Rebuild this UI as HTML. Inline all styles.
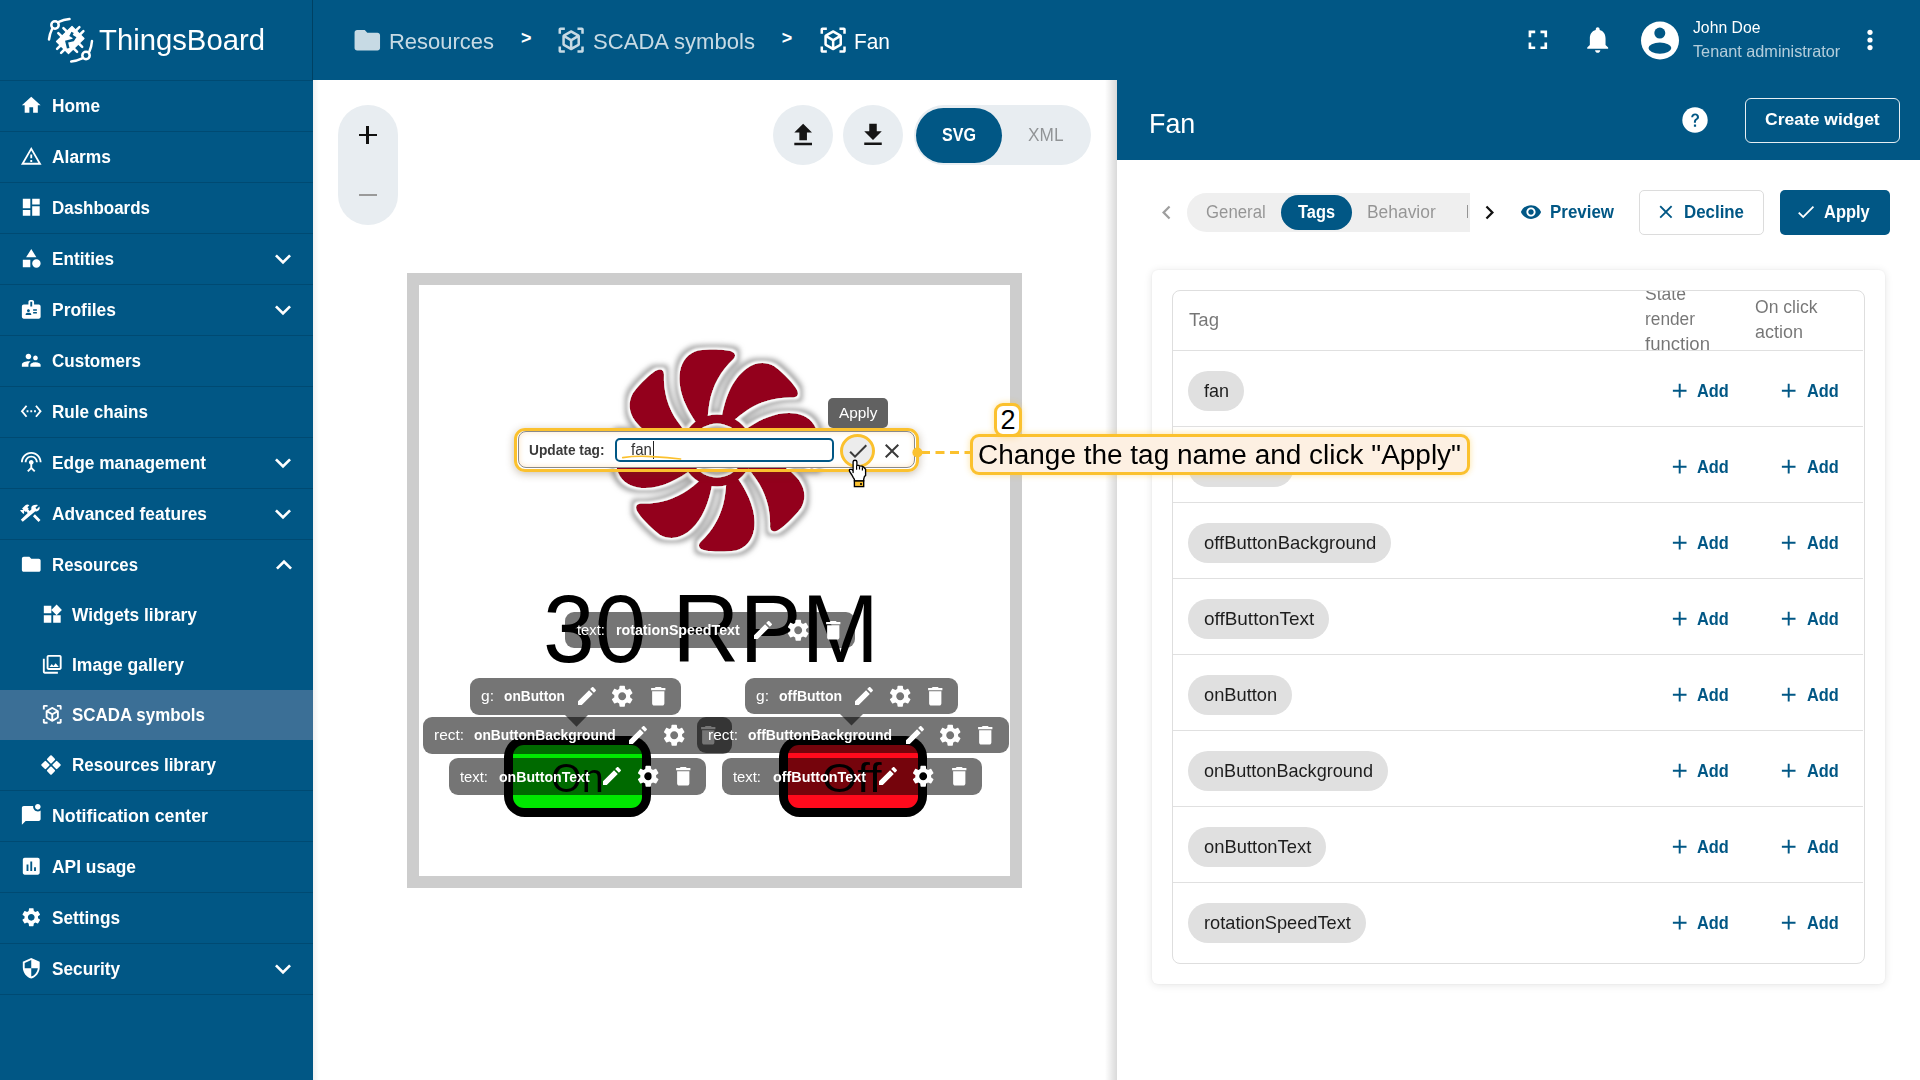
<!DOCTYPE html>
<html><head><meta charset="utf-8"><style>
*{box-sizing:border-box;margin:0;padding:0}
html,body{width:1920px;height:1080px;overflow:hidden;background:#fff;font-family:"Liberation Sans",sans-serif}
.a{position:absolute}
svg.i{position:absolute;overflow:visible}
.t{position:absolute;white-space:nowrap;line-height:1}
</style></head><body>
<div class="a" style="left:0;top:0;width:313px;height:1080px;background:#015785"></div>
<div class="a" style="left:0;top:80px;width:313px;height:1px;background:rgba(0,0,0,.14)"></div>
<div class="a" style="left:0;top:131px;width:313px;height:1px;background:rgba(0,0,0,.14)"></div>
<div class="a" style="left:0;top:182px;width:313px;height:1px;background:rgba(0,0,0,.14)"></div>
<div class="a" style="left:0;top:233px;width:313px;height:1px;background:rgba(0,0,0,.14)"></div>
<div class="a" style="left:0;top:284px;width:313px;height:1px;background:rgba(0,0,0,.14)"></div>
<div class="a" style="left:0;top:335px;width:313px;height:1px;background:rgba(0,0,0,.14)"></div>
<div class="a" style="left:0;top:386px;width:313px;height:1px;background:rgba(0,0,0,.14)"></div>
<div class="a" style="left:0;top:437px;width:313px;height:1px;background:rgba(0,0,0,.14)"></div>
<div class="a" style="left:0;top:488px;width:313px;height:1px;background:rgba(0,0,0,.14)"></div>
<div class="a" style="left:0;top:539px;width:313px;height:1px;background:rgba(0,0,0,.14)"></div>
<div class="a" style="left:0;top:790px;width:313px;height:1px;background:rgba(0,0,0,.14)"></div>
<div class="a" style="left:0;top:841px;width:313px;height:1px;background:rgba(0,0,0,.14)"></div>
<div class="a" style="left:0;top:892px;width:313px;height:1px;background:rgba(0,0,0,.14)"></div>
<div class="a" style="left:0;top:943px;width:313px;height:1px;background:rgba(0,0,0,.14)"></div>
<div class="a" style="left:0;top:994px;width:313px;height:1px;background:rgba(0,0,0,.14)"></div>
<div class="a" style="left:0;top:690px;width:313px;height:50px;background:#3b6f96"></div>
<svg class="i" style="left:20.10px;top:94.20px;width:22.50px;height:22.50px;fill:#fff;" viewBox="0 0 24 24"><path d="M10 20v-6h4v6h5v-8h3L12 3 2 12h3v8z"/></svg>
<div id="t1" class="t" style="left:52.00px;top:96.96px;font-size:18px;color:#fff;font-weight:bold;transform:scaleX(0.9597);transform-origin:0 0;">Home</div>
<svg class="i" style="left:20.10px;top:145.20px;width:22.50px;height:22.50px;fill:#fff;" viewBox="0 0 24 24"><path d="M12 5.99L19.53 19H4.47L12 5.99M12 2L1 21h22L12 2zm1 14h-2v2h2v-2zm0-6h-2v4h2v-4z"/></svg>
<div id="t2" class="t" style="left:52.00px;top:147.96px;font-size:18px;color:#fff;font-weight:bold;transform:scaleX(0.9667);transform-origin:0 0;">Alarms</div>
<svg class="i" style="left:20.10px;top:196.20px;width:22.50px;height:22.50px;fill:#fff;" viewBox="0 0 24 24"><path d="M3 13h8V3H3v10zm0 8h8v-6H3v6zm10 0h8V11h-8v10zm0-18v6h8V3h-8z"/></svg>
<div id="t3" class="t" style="left:52.00px;top:198.96px;font-size:18px;color:#fff;font-weight:bold;transform:scaleX(0.9420);transform-origin:0 0;">Dashboards</div>
<svg class="i" style="left:20.10px;top:247.20px;width:22.50px;height:22.50px;fill:#fff;" viewBox="0 0 24 24"><path d="M12 2l-5.5 9h11zM17.5 13a4.5 4.5 0 1 0 0 9a4.5 4.5 0 1 0 0-9zM3 13.5h8v8H3z"/></svg>
<div id="t4" class="t" style="left:52.00px;top:249.96px;font-size:18px;color:#fff;font-weight:bold;transform:scaleX(0.9536);transform-origin:0 0;">Entities</div>
<svg class="i" style="left:266.50px;top:242.70px;width:32.00px;height:32.00px;fill:#fff;" viewBox="0 0 24 24"><path d="M7.41 8.59L12 13.17l4.59-4.58L18 10l-6 6-6-6 1.41-1.41z"/></svg>
<svg class="i" style="left:20.10px;top:298.20px;width:22.50px;height:22.50px;fill:#fff;" viewBox="0 0 24 24"><path d="M20 7h-5V4c0-1.1-.9-2-2-2h-2c-1.1 0-2 .9-2 2v3H4c-1.1 0-2 .9-2 2v11c0 1.1.9 2 2 2h16c1.1 0 2-.9 2-2V9c0-1.1-.9-2-2-2zM9 12c.83 0 1.5.67 1.5 1.5S9.83 15 9 15s-1.5-.67-1.5-1.5S8.17 12 9 12zm3 6H6v-.75c0-1 2-1.5 3-1.5s3 .5 3 1.5V18zm1-9h-2V4h2v5zm5 7.5h-4V15h4v1.5zm0-3h-4V12h4v1.5z"/></svg>
<div id="t5" class="t" style="left:52.00px;top:300.96px;font-size:18px;color:#fff;font-weight:bold;transform:scaleX(0.9692);transform-origin:0 0;">Profiles</div>
<svg class="i" style="left:266.50px;top:293.70px;width:32.00px;height:32.00px;fill:#fff;" viewBox="0 0 24 24"><path d="M7.41 8.59L12 13.17l4.59-4.58L18 10l-6 6-6-6 1.41-1.41z"/></svg>
<svg class="i" style="left:20.10px;top:349.20px;width:22.50px;height:22.50px;fill:#fff;" viewBox="0 0 24 24"><path d="M16.5 12c1.38 0 2.49-1.12 2.49-2.5S17.88 7 16.5 7C15.12 7 14 8.12 14 9.5s1.12 2.5 2.5 2.5zM9 11c1.66 0 2.99-1.34 2.99-3S10.66 5 9 5C7.34 5 6 6.34 6 8s1.34 3 3 3zm7.5 3c-1.83 0-5.5.92-5.5 2.75V19h11v-2.25c0-1.83-3.67-2.75-5.5-2.75zM9 13c-2.33 0-7 1.17-7 3.5V19h7v-2.25c0-.85.33-2.34 2.37-3.47C10.5 13.1 9.66 13 9 13z"/></svg>
<div id="t6" class="t" style="left:52.00px;top:351.96px;font-size:18px;color:#fff;font-weight:bold;transform:scaleX(0.9465);transform-origin:0 0;">Customers</div>
<svg class="i" style="left:20.10px;top:400.20px;width:22.50px;height:22.50px;fill:#fff;" viewBox="0 0 24 24"><path d="M7.77 6.76L6.23 5.48.82 12l5.41 6.52 1.54-1.28L3.42 12l4.35-5.24zM7 13h2v-2H7v2zm10-2h-2v2h2v-2zm-6 2h2v-2h-2v2zm6.77-7.52l-1.54 1.28L20.58 12l-4.35 5.24 1.54 1.28L23.18 12l-5.41-6.52z"/></svg>
<div id="t7" class="t" style="left:52.00px;top:402.96px;font-size:18px;color:#fff;font-weight:bold;transform:scaleX(0.9502);transform-origin:0 0;">Rule chains</div>
<svg class="i" style="left:20.10px;top:451.20px;width:22.50px;height:22.50px;fill:#fff;" viewBox="0 0 24 24"><path d="M12 5c-3.87 0-7 3.13-7 7h2c0-2.76 2.24-5 5-5s5 2.24 5 5h2c0-3.87-3.13-7-7-7zm1 9.29c.88-.39 1.5-1.26 1.5-2.29 0-1.38-1.12-2.5-2.5-2.5S9.5 10.62 9.5 12c0 1.02.62 1.9 1.5 2.29v3.3L7.59 21 9 22.41l3-3 3 3L16.41 21 13 17.59v-3.3zM12 1C5.93 1 1 5.93 1 12h2c0-4.97 4.03-9 9-9s9 4.03 9 9h2c0-6.07-4.93-11-11-11z"/></svg>
<div id="t8" class="t" style="left:52.00px;top:453.96px;font-size:18px;color:#fff;font-weight:bold;transform:scaleX(0.9622);transform-origin:0 0;">Edge management</div>
<svg class="i" style="left:266.50px;top:446.70px;width:32.00px;height:32.00px;fill:#fff;" viewBox="0 0 24 24"><path d="M7.41 8.59L12 13.17l4.59-4.58L18 10l-6 6-6-6 1.41-1.41z"/></svg>
<svg class="i" style="left:20.10px;top:502.20px;width:22.50px;height:22.50px;fill:#fff;" viewBox="0 0 24 24"><path d="M13.78 15.3l6 6 2.11-2.16-6-6zm3.72-5.3c1.93 0 3.5-1.57 3.5-3.5 0-.58-.16-1.12-.41-1.6l-2.7 2.7-1.49-1.49 2.7-2.7c-.48-.25-1.02-.41-1.6-.41C13.57 3 12 4.57 12 6.5c0 .41.08.8.21 1.16l-1.85 1.85-1.78-1.78.71-.71-1.41-1.41L10 3.49c-1.17-1.17-3.07-1.17-4.24 0L2.22 7.03l1.41 1.41H.81l-.71.71 3.54 3.54.71-.71V9.15l1.41 1.41.71-.71 1.78 1.78-7.41 7.41 2.12 2.12L16.34 9.79c.36.13.75.21 1.16.21z"/></svg>
<div id="t9" class="t" style="left:52.00px;top:504.96px;font-size:18px;color:#fff;font-weight:bold;transform:scaleX(0.9624);transform-origin:0 0;">Advanced features</div>
<svg class="i" style="left:266.50px;top:497.70px;width:32.00px;height:32.00px;fill:#fff;" viewBox="0 0 24 24"><path d="M7.41 8.59L12 13.17l4.59-4.58L18 10l-6 6-6-6 1.41-1.41z"/></svg>
<svg class="i" style="left:20.10px;top:553.20px;width:22.50px;height:22.50px;fill:#fff;" viewBox="0 0 24 24"><path d="M10 4H4c-1.1 0-1.99.9-1.99 2L2 18c0 1.1.9 2 2 2h16c1.1 0 2-.9 2-2V8c0-1.1-.9-2-2-2h-8l-2-2z"/></svg>
<div id="t10" class="t" style="left:52.00px;top:555.96px;font-size:18px;color:#fff;font-weight:bold;transform:scaleX(0.9341);transform-origin:0 0;">Resources</div>
<svg class="i" style="left:268.20px;top:549.00px;width:32.00px;height:32.00px;fill:#fff;" viewBox="0 0 24 24"><path d="M12 8l-6 6 1.41 1.41L12 10.83l4.59 4.58L18 14z"/></svg>
<svg class="i" style="left:40.90px;top:603.20px;width:22.50px;height:22.50px;fill:#fff;" viewBox="0 0 24 24"><path d="M13 13v8h8v-8h-8zM3 21h8v-8H3v8zM3 3v8h8V3H3zm13.66-1.31L11 7.34 16.66 13l5.66-5.66-5.66-5.65z"/></svg>
<div id="t11" class="t" style="left:72.00px;top:605.96px;font-size:18px;color:#fff;font-weight:bold;transform:scaleX(0.9625);transform-origin:0 0;">Widgets library</div>
<svg class="i" style="left:40.90px;top:653.20px;width:22.50px;height:22.50px;fill:#fff;" viewBox="0 0 24 24"><path d="M20 4v12H8V4h12m0-2H8c-1.1 0-2 .9-2 2v12c0 1.1.9 2 2 2h12c1.1 0 2-.9 2-2V4c0-1.1-.9-2-2-2zm-8.5 9.67l1.69 2.26 2.48-3.1L19 15H9zM2 6v14c0 1.1.9 2 2 2h14v-2H4V6H2z"/></svg>
<div id="t12" class="t" style="left:72.00px;top:655.96px;font-size:18px;color:#fff;font-weight:bold;transform:scaleX(0.9734);transform-origin:0 0;">Image gallery</div>
<svg class="i" style="left:40.90px;top:703.20px;width:22.50px;height:22.50px;fill:#fff;" viewBox="0 0 24 24"><path d="M18.25 7.6l-5.5-3.18c-.46-.27-1.04-.27-1.5 0L5.75 7.6c-.46.27-.75.76-.75 1.3v6.35c0 .54.29 1.03.75 1.3l5.5 3.18c.46.27 1.04.27 1.5 0l5.5-3.18c.46-.27.75-.76.75-1.3V8.9c0-.54-.29-1.03-.75-1.3zM7 14.96v-4.62l4 2.32v4.61l-4-2.31zm5-4.03L8 8.61l4-2.31 4 2.31-4 2.32zm1 6.34v-4.61l4-2.32v4.62l-4 2.31zM7 2H3.5C2.67 2 2 2.67 2 3.5V7h2V4h3V2zm10 0h3.5c.83 0 1.5.67 1.5 1.5V7h-2V4h-3V2zM7 22H3.5c-.83 0-1.5-.67-1.5-1.5V17h2v3h3v2zm10 0h3.5c.83 0 1.5-.67 1.5-1.5V17h-2v3h-3v2z"/></svg>
<div id="t13" class="t" style="left:72.00px;top:705.96px;font-size:18px;color:#fff;font-weight:bold;transform:scaleX(0.9408);transform-origin:0 0;">SCADA symbols</div>
<svg class="i" style="left:36.3px;top:750.3px;width:30px;height:30px" viewBox="0 0 30 30" fill="#fff"><rect x="11.80" y="6.20" width="6.4" height="6.4" rx="1" transform="rotate(45 15 9.4)"/><rect x="6.20" y="11.80" width="6.4" height="6.4" rx="1" transform="rotate(45 9.4 15)"/><rect x="17.40" y="11.80" width="6.4" height="6.4" rx="1" transform="rotate(45 20.6 15)"/><rect x="11.80" y="17.40" width="6.4" height="6.4" rx="1" transform="rotate(45 15 20.6)"/></svg>
<div id="t14" class="t" style="left:72.00px;top:755.96px;font-size:18px;color:#fff;font-weight:bold;transform:scaleX(0.9469);transform-origin:0 0;">Resources library</div>
<svg class="i" style="left:20.10px;top:804.20px;width:22.50px;height:22.50px;fill:#fff;" viewBox="0 0 24 24"><path d="M22 6.98V16c0 1.1-.9 2-2 2H6l-4 4V4c0-1.1.9-2 2-2h10.1c-.06.32-.1.66-.1 1 0 2.76 2.24 5 5 5 1.13 0 2.16-.39 3-1.02zM16 3c0 1.66 1.34 3 3 3s3-1.34 3-3-1.34-3-3-3-3 1.34-3 3z"/></svg>
<div id="t15" class="t" style="left:52.00px;top:806.96px;font-size:18px;color:#fff;font-weight:bold;transform:scaleX(0.9871);transform-origin:0 0;">Notification center</div>
<svg class="i" style="left:20.10px;top:855.20px;width:22.50px;height:22.50px;fill:#fff;" viewBox="0 0 24 24"><path d="M19 3H5c-1.1 0-2 .9-2 2v14c0 1.1.9 2 2 2h14c1.1 0 2-.9 2-2V5c0-1.1-.9-2-2-2zM9 17H7v-7h2v7zm4 0h-2V7h2v10zm4 0h-2v-4h2v4z"/></svg>
<div id="t16" class="t" style="left:52.00px;top:857.96px;font-size:18px;color:#fff;font-weight:bold;transform:scaleX(0.9652);transform-origin:0 0;">API usage</div>
<svg class="i" style="left:20.10px;top:906.20px;width:22.50px;height:22.50px;fill:#fff;" viewBox="0 0 24 24"><path d="M19.14 12.94c.04-.3.06-.61.06-.94 0-.32-.02-.64-.07-.94l2.03-1.58c.18-.14.23-.41.12-.61l-1.92-3.32c-.12-.22-.37-.29-.59-.22l-2.39.96c-.5-.38-1.03-.7-1.62-.94l-.36-2.54c-.04-.24-.24-.41-.48-.41h-3.84c-.24 0-.43.17-.47.41l-.36 2.540c-.59.24-1.13.57-1.62.94l-2.39-.96c-.22-.08-.47 0-.59.22L2.74 8.87c-.12.21-.08.47.12.61l2.03 1.58c-.05.3-.09.63-.09.94s.02.64.07.94l-2.03 1.58c-.18.14-.23.41-.12.61l1.92 3.32c.12.22.37.29.59.22l2.39-.96c.5.38 1.03.7 1.62.94l.36 2.54c.05.24.24.41.48.41h3.84c.24 0 .44-.17.47-.41l.36-2.54c.59-.24 1.13-.56 1.62-.94l2.39.96c.22.08.47 0 .59-.22l1.92-3.32c.12-.22.07-.47-.12-.61l-2.01-1.58zM12 15.6c-1.98 0-3.6-1.62-3.6-3.6s1.62-3.6 3.6-3.6 3.6 1.62 3.6 3.6-1.62 3.6-3.6 3.6z"/></svg>
<div id="t17" class="t" style="left:52.00px;top:908.96px;font-size:18px;color:#fff;font-weight:bold;transform:scaleX(0.9575);transform-origin:0 0;">Settings</div>
<svg class="i" style="left:20.10px;top:957.20px;width:22.50px;height:22.50px;fill:#fff;" viewBox="0 0 24 24"><path d="M12 1L3 5v6c0 5.55 3.84 10.74 9 12 5.16-1.26 9-6.45 9-12V5l-9-4zm0 10.99h7c-.53 4.12-3.28 7.79-7 8.94V12H5V6.3l7-3.11v8.8z"/></svg>
<div id="t18" class="t" style="left:52.00px;top:959.96px;font-size:18px;color:#fff;font-weight:bold;transform:scaleX(0.9571);transform-origin:0 0;">Security</div>
<svg class="i" style="left:266.50px;top:952.70px;width:32.00px;height:32.00px;fill:#fff;" viewBox="0 0 24 24"><path d="M7.41 8.59L12 13.17l4.59-4.58L18 10l-6 6-6-6 1.41-1.41z"/></svg>
<svg class="i" style="left:44px;top:14px;width:54px;height:54px" viewBox="0 0 54 54"><g fill="none" stroke="#fff" stroke-width="2.5" stroke-linecap="round"><circle cx="11" cy="11" r="3.7"/><circle cx="42" cy="41.5" r="3.7"/><path d="M14.8 7.9 Q 19.5 5.6 25.5 5"/><path d="M8.2 14.8 Q 5.6 20 5 25.5"/><path d="M45.3 37.8 Q 47.6 32.5 48 27"/><path d="M38.2 44.4 Q 33 46.9 27.2 47.5"/><path d="M17.7 22.5L14.3 19.1M22.8 17.5L19.4 14.1M32 16.5L35.4 13.1M36 20.5L39.4 17.1M34.8 29.5L38.2 32.9M29.7 34.5L33.1 37.9M20.5 35.5L17.1 38.9M16.5 31.5L13.1 34.9"/></g><path d="M28 12.5L40 24.5L24.5 39.5L12.5 27.5Z" fill="#fff" stroke="#fff" stroke-width="1.2" stroke-linejoin="round"/><path d="M28.6 18.3L27 21.4L30.6 23.6L29 26L22.6 27.6L24.2 34.2" fill="none" stroke="#015785" stroke-width="2.6"/></svg>
<div id="t19" class="t" style="left:99.00px;top:24.61px;font-size:30px;color:#fff;font-weight:normal;transform:scaleX(0.9758);transform-origin:0 0;">ThingsBoard</div>
<div class="a" style="left:313px;top:0;width:1607px;height:80px;background:#015785"></div>
<div class="a" style="left:312px;top:0;width:1px;height:80px;background:rgba(0,0,0,.25)"></div>
<svg class="i" style="left:352.25px;top:24.70px;width:30.60px;height:30.60px;fill:rgba(255,255,255,.78);" viewBox="0 0 24 24"><path d="M10 4H4c-1.1 0-1.99.9-1.99 2L2 18c0 1.1.9 2 2 2h16c1.1 0 2-.9 2-2V8c0-1.1-.9-2-2-2h-8l-2-2z"/></svg>
<div id="t20" class="t" style="left:389.00px;top:31.08px;font-size:22px;color:rgba(255,255,255,.78);font-weight:normal;transform:scaleX(0.9985);transform-origin:0 0;">Resources</div>
<div id="t21" class="t" style="left:521.00px;top:29.36px;font-size:18px;color:#fff;font-weight:bold;">&gt;</div>
<svg class="i" style="left:556.20px;top:25.00px;width:30.30px;height:30.30px;fill:rgba(255,255,255,.78);" viewBox="0 0 24 24"><path d="M18.25 7.6l-5.5-3.18c-.46-.27-1.04-.27-1.5 0L5.75 7.6c-.46.27-.75.76-.75 1.3v6.35c0 .54.29 1.03.75 1.3l5.5 3.18c.46.27 1.04.27 1.5 0l5.5-3.18c.46-.27.75-.76.75-1.3V8.9c0-.54-.29-1.03-.75-1.3zM7 14.96v-4.62l4 2.32v4.61l-4-2.31zm5-4.03L8 8.61l4-2.31 4 2.31-4 2.32zm1 6.34v-4.61l4-2.32v4.62l-4 2.31zM7 2H3.5C2.67 2 2 2.67 2 3.5V7h2V4h3V2zm10 0h3.5c.83 0 1.5.67 1.5 1.5V7h-2V4h-3V2zM7 22H3.5c-.83 0-1.5-.67-1.5-1.5V17h2v3h3v2zm10 0h3.5c.83 0 1.5-.67 1.5-1.5V17h-2v3h-3v2z"/></svg>
<div id="t22" class="t" style="left:592.50px;top:31.08px;font-size:22px;color:rgba(255,255,255,.78);font-weight:normal;transform:scaleX(1.0038);transform-origin:0 0;">SCADA symbols</div>
<div id="t23" class="t" style="left:781.70px;top:29.36px;font-size:18px;color:#fff;font-weight:bold;">&gt;</div>
<svg class="i" style="left:817.50px;top:25.00px;width:30.30px;height:30.30px;fill:#fff;" viewBox="0 0 24 24"><path d="M18.25 7.6l-5.5-3.18c-.46-.27-1.04-.27-1.5 0L5.75 7.6c-.46.27-.75.76-.75 1.3v6.35c0 .54.29 1.03.75 1.3l5.5 3.18c.46.27 1.04.27 1.5 0l5.5-3.18c.46-.27.75-.76.75-1.3V8.9c0-.54-.29-1.03-.75-1.3zM7 14.96v-4.62l4 2.32v4.61l-4-2.31zm5-4.03L8 8.61l4-2.31 4 2.31-4 2.32zm1 6.34v-4.61l4-2.32v4.62l-4 2.31zM7 2H3.5C2.67 2 2 2.67 2 3.5V7h2V4h3V2zm10 0h3.5c.83 0 1.5.67 1.5 1.5V7h-2V4h-3V2zM7 22H3.5c-.83 0-1.5-.67-1.5-1.5V17h2v3h3v2zm10 0h3.5c.83 0 1.5-.67 1.5-1.5V17h-2v3h-3v2z"/></svg>
<div id="t24" class="t" style="left:854.00px;top:31.08px;font-size:22px;color:#fff;font-weight:normal;transform:scaleX(0.9493);transform-origin:0 0;">Fan</div>
<svg class="i" style="left:1521.60px;top:24.20px;width:31.70px;height:31.70px;fill:#fff;" viewBox="0 0 24 24"><path d="M7 14H5v5h5v-2H7v-3zm-2-4h2V7h3V5H5v5zm12 7h-3v2h5v-5h-2v3zM14 5v2h3v3h2V5h-5z"/></svg>
<svg class="i" style="left:1581.80px;top:24.40px;width:31.40px;height:31.40px;fill:#fff;" viewBox="0 0 24 24"><path d="M12 22c1.1 0 2-.9 2-2h-4c0 1.1.89 2 2 2zm6-6v-5c0-3.07-1.64-5.64-4.5-6.32V4c0-.83-.67-1.5-1.5-1.5s-1.5.67-1.5 1.5v.68C7.63 5.36 6 7.92 6 11v5l-2 2v1h16v-1l-2-2z"/></svg>
<svg class="i" style="left:1640px;top:21px;width:40px;height:40px" viewBox="0 0 40 40"><circle cx="20" cy="19.5" r="19" fill="#fff"/><circle cx="19.8" cy="12.1" r="5.5" fill="#015785"/><ellipse cx="19.9" cy="27.1" rx="11.4" ry="5.6" fill="#015785"/></svg>
<div id="t25" class="t" style="left:1692.60px;top:18.93px;font-size:16.5px;color:#fff;font-weight:normal;transform:scaleX(0.9541);transform-origin:0 0;">John Doe</div>
<div id="t26" class="t" style="left:1692.60px;top:42.73px;font-size:16.5px;color:rgba(255,255,255,.7);font-weight:normal;transform:scaleX(0.9846);transform-origin:0 0;">Tenant administrator</div>
<svg class="i" style="left:1860px;top:25px;width:20px;height:30px" viewBox="0 0 20 30" fill="#fff"><circle cx="10" cy="7.3" r="2.6"/><circle cx="10" cy="15" r="2.6"/><circle cx="10" cy="22.6" r="2.6"/></svg>
<div class="a" style="left:313px;top:80px;width:6px;height:1000px;background:linear-gradient(to right,rgba(0,0,0,.06),rgba(0,0,0,0))"></div>
<div class="a" style="left:338px;top:105px;width:60px;height:120px;border-radius:30px;background:#e8edf1"></div>
<div class="a" style="left:358.5px;top:134px;width:18px;height:2.2px;background:#111"></div>
<div class="a" style="left:366.4px;top:126px;width:2.2px;height:18px;background:#111"></div>
<div class="a" style="left:358.5px;top:193.7px;width:18px;height:2.2px;background:#9a9a9a"></div>
<div class="a" style="left:773px;top:105px;width:60px;height:60px;border-radius:50%;background:#e8edf1"></div>
<div class="a" style="left:843px;top:105px;width:60px;height:60px;border-radius:50%;background:#e8edf1"></div>
<svg class="i" style="left:788.20px;top:120.40px;width:30.30px;height:30.30px;fill:#151515;" viewBox="0 0 24 24"><path d="M9 16h6v-6h4l-7-7-7 7h4zm-4 2h14v2H5z"/></svg>
<svg class="i" style="left:858.30px;top:119.50px;width:30.00px;height:30.00px;fill:#151515;" viewBox="0 0 24 24"><path d="M19 9h-4V3H9v6H5l7 7 7-7zM5 18v2h14v-2H5z"/></svg>
<div class="a" style="left:913.7px;top:104.6px;width:177px;height:60.4px;border-radius:30px;background:#e8edf1"></div>
<div class="a" style="left:915.8px;top:107.5px;width:86.2px;height:55.5px;border-radius:28px;background:#015785"></div>
<div id="t27" class="t" style="left:942.00px;top:125.96px;font-size:18px;color:#fff;font-weight:bold;transform:scaleX(0.8944);transform-origin:0 0;">SVG</div>
<div id="t28" class="t" style="left:1027.50px;top:125.96px;font-size:18px;color:rgba(0,0,0,.38);font-weight:normal;transform:scaleX(0.9591);transform-origin:0 0;">XML</div>
<div class="a" style="left:407px;top:273px;width:615px;height:615px;border:12px solid #cdcdcd;background:#fff"></div>
<div class="a" style="left:1105px;top:80px;width:12px;height:1000px;background:linear-gradient(to right,rgba(0,0,0,0),rgba(0,0,0,.15))"></div>
<div class="a" style="left:1117px;top:80px;width:803px;height:1000px;background:#fff"></div>
<div class="a" style="left:1117px;top:80px;width:803px;height:80px;background:#015785"></div>
<div id="t29" class="t" style="left:1149.00px;top:108.87px;font-size:28.5px;color:#fff;font-weight:normal;transform:scaleX(0.9425);transform-origin:0 0;">Fan</div>
<svg class="i" style="left:1682px;top:107px;width:26px;height:26px" viewBox="0 0 26 26"><circle cx="13" cy="13" r="12.7" fill="#fff"/><path d="M9.2 10.2c0-2.2 1.7-3.8 3.9-3.8 2.2 0 3.9 1.5 3.9 3.5 0 1.4-.8 2.2-1.7 2.9-.9.7-1.4 1.2-1.4 2.5v.5h-2v-.7c0-1.8.7-2.5 1.7-3.3.8-.6 1.3-1 1.3-1.9 0-1-.8-1.7-1.8-1.7s-1.9.8-1.9 2z M11.9 17.6h2.2v2.2h-2.2z" fill="#015785"/></svg>
<div class="a" style="left:1745px;top:98px;width:155px;height:45px;border:1.5px solid rgba(255,255,255,.9);border-radius:6px"></div>
<div id="t30" class="t" style="left:1765.30px;top:111.21px;font-size:17px;color:#fff;font-weight:bold;transform:scaleX(1.0288);transform-origin:0 0;">Create widget</div>
<svg class="i" style="left:1153.30px;top:199.00px;width:27.00px;height:27.00px;fill:rgba(0,0,0,.38);" viewBox="0 0 24 24"><path d="M15.41 7.41L14 6l-6 6 6 6 1.41-1.41L10.83 12z"/></svg>
<div class="a" style="left:1187px;top:193px;width:283px;height:39.4px;border-radius:20px 0 0 20px;background:#efefef"></div>
<div class="a" style="left:1281px;top:195px;width:71px;height:34.7px;border-radius:18px;background:#015785"></div>
<div id="t31" class="t" style="left:1205.50px;top:203.26px;font-size:18px;color:rgba(0,0,0,.38);font-weight:normal;transform:scaleX(0.9321);transform-origin:0 0;">General</div>
<div id="t32" class="t" style="left:1298.00px;top:203.26px;font-size:18px;color:#fff;font-weight:bold;transform:scaleX(0.9094);transform-origin:0 0;">Tags</div>
<div id="t33" class="t" style="left:1367.30px;top:203.26px;font-size:18px;color:rgba(0,0,0,.38);font-weight:normal;transform:scaleX(0.9670);transform-origin:0 0;">Behavior</div>
<div class="a" style="left:1466.5px;top:204.5px;width:1.8px;height:13px;background:rgba(0,0,0,.38)"></div>
<svg class="i" style="left:1476.00px;top:199.00px;width:27.00px;height:27.00px;fill:#111;" viewBox="0 0 24 24"><path d="M10 6L8.59 7.41 13.17 12l-4.58 4.59L10 18l6-6z"/></svg>
<svg class="i" style="left:1520.30px;top:201.00px;width:22.00px;height:22.00px;fill:#015785;" viewBox="0 0 24 24"><path d="M12 4.5C7 4.5 2.730 7.61 1 12c1.73 4.39 6 7.5 11 7.5s9.27-3.11 11-7.5c-1.73-4.39-6-7.5-11-7.5zM12 17c-2.76 0-5-2.24-5-5s2.24-5 5-5 5 2.24 5 5-2.24 5-5 5zm0-8c-1.66 0-3 1.34-3 3s1.34 3 3 3 3-1.34 3-3-1.34-3-3-3z"/></svg>
<div id="t34" class="t" style="left:1549.60px;top:204.39px;font-size:17.5px;color:#015785;font-weight:bold;transform:scaleX(0.9674);transform-origin:0 0;">Preview</div>
<div class="a" style="left:1639.4px;top:190.2px;width:125.1px;height:44.8px;border:1px solid #dcdcdc;border-radius:5px"></div>
<svg class="i" style="left:1654.80px;top:201.00px;width:21.80px;height:21.80px;fill:#015785;" viewBox="0 0 24 24"><path d="M19 6.41L17.59 5 12 10.59 6.41 5 5 6.41 10.59 12 5 17.59 6.41 19 12 13.41 17.59 19 19 17.59 13.41 12z"/></svg>
<div id="t35" class="t" style="left:1684.00px;top:204.39px;font-size:17.5px;color:#015785;font-weight:bold;transform:scaleX(0.9639);transform-origin:0 0;">Decline</div>
<div class="a" style="left:1780.2px;top:190.2px;width:109.6px;height:44.8px;border-radius:5px;background:#015785"></div>
<svg class="i" style="left:1794.90px;top:200.80px;width:21.80px;height:21.80px;fill:#fff;" viewBox="0 0 24 24"><path d="M9 16.17L4.83 12l-1.42 1.41L9 19 21 7l-1.41-1.41z"/></svg>
<div id="t36" class="t" style="left:1823.80px;top:204.39px;font-size:17.5px;color:#fff;font-weight:bold;transform:scaleX(0.9398);transform-origin:0 0;">Apply</div>
<div class="a" style="left:1152px;top:270px;width:733px;height:714px;border-radius:6px;background:#fff;box-shadow:0 1px 9px rgba(0,0,0,.11),0 0 2px rgba(0,0,0,.05)"></div>
<div class="a" style="left:1172.4px;top:290px;width:692.6px;height:673.5px;border:1px solid #dedede;border-radius:8px"></div>
<div class="a" style="left:1173px;top:350.0px;width:690px;height:1px;background:#e0e0e0"></div>
<div class="a" style="left:1173px;top:426.0px;width:690px;height:1px;background:#e0e0e0"></div>
<div class="a" style="left:1173px;top:502.0px;width:690px;height:1px;background:#e0e0e0"></div>
<div class="a" style="left:1173px;top:578.0px;width:690px;height:1px;background:#e0e0e0"></div>
<div class="a" style="left:1173px;top:654.0px;width:690px;height:1px;background:#e0e0e0"></div>
<div class="a" style="left:1173px;top:730.0px;width:690px;height:1px;background:#e0e0e0"></div>
<div class="a" style="left:1173px;top:806.0px;width:690px;height:1px;background:#e0e0e0"></div>
<div class="a" style="left:1173px;top:882.0px;width:690px;height:1px;background:#e0e0e0"></div>
<div id="t37" class="t" style="left:1188.60px;top:310.76px;font-size:18px;color:rgba(0,0,0,.54);font-weight:normal;transform:scaleX(1.0334);transform-origin:0 0;">Tag</div>
<div class="a" style="left:1173px;top:291px;width:690px;height:62px;overflow:hidden">
<div id="t38" class="t" style="left:472.00px;top:-5.64px;font-size:18px;color:rgba(0,0,0,.54);font-weight:normal;transform:scaleX(0.9755);transform-origin:0 0;">State</div>
<div id="t39" class="t" style="left:472.00px;top:19.16px;font-size:18px;color:rgba(0,0,0,.54);font-weight:normal;transform:scaleX(0.9610);transform-origin:0 0;">render</div>
<div id="t40" class="t" style="left:472.00px;top:43.96px;font-size:18px;color:rgba(0,0,0,.54);font-weight:normal;transform:scaleX(1.0310);transform-origin:0 0;">function</div>
<div id="t41" class="t" style="left:582.00px;top:7.06px;font-size:18px;color:rgba(0,0,0,.54);font-weight:normal;transform:scaleX(0.9763);transform-origin:0 0;">On click</div>
<div id="t42" class="t" style="left:582.00px;top:31.96px;font-size:18px;color:rgba(0,0,0,.54);font-weight:normal;transform:scaleX(0.9990);transform-origin:0 0;">action</div>
</div>
<div class="a" style="left:1188px;top:371px;width:56.0px;height:40px;border-radius:20px;background:#e0e0e0"></div>
<div id="t43" class="t" style="left:1203.80px;top:381.54px;font-size:18.5px;color:rgba(0,0,0,.87);font-weight:normal;transform:scaleX(0.9721);transform-origin:0 0;">fan</div>
<svg class="i" style="left:1667.80px;top:378.70px;width:23.40px;height:23.40px;fill:#015785;" viewBox="0 0 24 24"><path d="M19 13h-6v6h-2v-6H5v-2h6V5h2v6h6v2z"/></svg>
<div id="t44" class="t" style="left:1697.00px;top:382.36px;font-size:18px;color:#015785;font-weight:bold;transform:scaleX(0.9086);transform-origin:0 0;">Add</div>
<svg class="i" style="left:1777.20px;top:378.70px;width:23.40px;height:23.40px;fill:#015785;" viewBox="0 0 24 24"><path d="M19 13h-6v6h-2v-6H5v-2h6V5h2v6h6v2z"/></svg>
<div id="t45" class="t" style="left:1806.70px;top:382.36px;font-size:18px;color:#015785;font-weight:bold;transform:scaleX(0.9086);transform-origin:0 0;">Add</div>
<div class="a" style="left:1188px;top:447px;width:106.4px;height:40px;border-radius:20px;background:#e0e0e0"></div>
<div id="t46" class="t" style="left:1203.80px;top:457.54px;font-size:18.5px;color:rgba(0,0,0,.87);font-weight:normal;transform:scaleX(1.0226);transform-origin:0 0;">offButton</div>
<svg class="i" style="left:1667.80px;top:454.70px;width:23.40px;height:23.40px;fill:#015785;" viewBox="0 0 24 24"><path d="M19 13h-6v6h-2v-6H5v-2h6V5h2v6h6v2z"/></svg>
<div id="t47" class="t" style="left:1697.00px;top:458.36px;font-size:18px;color:#015785;font-weight:bold;transform:scaleX(0.9086);transform-origin:0 0;">Add</div>
<svg class="i" style="left:1777.20px;top:454.70px;width:23.40px;height:23.40px;fill:#015785;" viewBox="0 0 24 24"><path d="M19 13h-6v6h-2v-6H5v-2h6V5h2v6h6v2z"/></svg>
<div id="t48" class="t" style="left:1806.70px;top:458.36px;font-size:18px;color:#015785;font-weight:bold;transform:scaleX(0.9086);transform-origin:0 0;">Add</div>
<div class="a" style="left:1188px;top:523px;width:203.3px;height:40px;border-radius:20px;background:#e0e0e0"></div>
<div id="t49" class="t" style="left:1203.80px;top:533.54px;font-size:18.5px;color:rgba(0,0,0,.87);font-weight:normal;transform:scaleX(0.9991);transform-origin:0 0;">offButtonBackground</div>
<svg class="i" style="left:1667.80px;top:530.70px;width:23.40px;height:23.40px;fill:#015785;" viewBox="0 0 24 24"><path d="M19 13h-6v6h-2v-6H5v-2h6V5h2v6h6v2z"/></svg>
<div id="t50" class="t" style="left:1697.00px;top:534.36px;font-size:18px;color:#015785;font-weight:bold;transform:scaleX(0.9086);transform-origin:0 0;">Add</div>
<svg class="i" style="left:1777.20px;top:530.70px;width:23.40px;height:23.40px;fill:#015785;" viewBox="0 0 24 24"><path d="M19 13h-6v6h-2v-6H5v-2h6V5h2v6h6v2z"/></svg>
<div id="t51" class="t" style="left:1806.70px;top:534.36px;font-size:18px;color:#015785;font-weight:bold;transform:scaleX(0.9086);transform-origin:0 0;">Add</div>
<div class="a" style="left:1188px;top:599px;width:141.2px;height:40px;border-radius:20px;background:#e0e0e0"></div>
<div id="t52" class="t" style="left:1203.80px;top:609.54px;font-size:18.5px;color:rgba(0,0,0,.87);font-weight:normal;transform:scaleX(1.0236);transform-origin:0 0;">offButtonText</div>
<svg class="i" style="left:1667.80px;top:606.70px;width:23.40px;height:23.40px;fill:#015785;" viewBox="0 0 24 24"><path d="M19 13h-6v6h-2v-6H5v-2h6V5h2v6h6v2z"/></svg>
<div id="t53" class="t" style="left:1697.00px;top:610.36px;font-size:18px;color:#015785;font-weight:bold;transform:scaleX(0.9086);transform-origin:0 0;">Add</div>
<svg class="i" style="left:1777.20px;top:606.70px;width:23.40px;height:23.40px;fill:#015785;" viewBox="0 0 24 24"><path d="M19 13h-6v6h-2v-6H5v-2h6V5h2v6h6v2z"/></svg>
<div id="t54" class="t" style="left:1806.70px;top:610.36px;font-size:18px;color:#015785;font-weight:bold;transform:scaleX(0.9086);transform-origin:0 0;">Add</div>
<div class="a" style="left:1188px;top:675px;width:104.2px;height:40px;border-radius:20px;background:#e0e0e0"></div>
<div id="t55" class="t" style="left:1203.80px;top:685.54px;font-size:18.5px;color:rgba(0,0,0,.87);font-weight:normal;transform:scaleX(0.9881);transform-origin:0 0;">onButton</div>
<svg class="i" style="left:1667.80px;top:682.70px;width:23.40px;height:23.40px;fill:#015785;" viewBox="0 0 24 24"><path d="M19 13h-6v6h-2v-6H5v-2h6V5h2v6h6v2z"/></svg>
<div id="t56" class="t" style="left:1697.00px;top:686.36px;font-size:18px;color:#015785;font-weight:bold;transform:scaleX(0.9086);transform-origin:0 0;">Add</div>
<svg class="i" style="left:1777.20px;top:682.70px;width:23.40px;height:23.40px;fill:#015785;" viewBox="0 0 24 24"><path d="M19 13h-6v6h-2v-6H5v-2h6V5h2v6h6v2z"/></svg>
<div id="t57" class="t" style="left:1806.70px;top:686.36px;font-size:18px;color:#015785;font-weight:bold;transform:scaleX(0.9086);transform-origin:0 0;">Add</div>
<div class="a" style="left:1188px;top:751px;width:200.0px;height:40px;border-radius:20px;background:#e0e0e0"></div>
<div id="t58" class="t" style="left:1203.80px;top:761.54px;font-size:18.5px;color:rgba(0,0,0,.87);font-weight:normal;transform:scaleX(0.9780);transform-origin:0 0;">onButtonBackground</div>
<svg class="i" style="left:1667.80px;top:758.70px;width:23.40px;height:23.40px;fill:#015785;" viewBox="0 0 24 24"><path d="M19 13h-6v6h-2v-6H5v-2h6V5h2v6h6v2z"/></svg>
<div id="t59" class="t" style="left:1697.00px;top:762.36px;font-size:18px;color:#015785;font-weight:bold;transform:scaleX(0.9086);transform-origin:0 0;">Add</div>
<svg class="i" style="left:1777.20px;top:758.70px;width:23.40px;height:23.40px;fill:#015785;" viewBox="0 0 24 24"><path d="M19 13h-6v6h-2v-6H5v-2h6V5h2v6h6v2z"/></svg>
<div id="t60" class="t" style="left:1806.70px;top:762.36px;font-size:18px;color:#015785;font-weight:bold;transform:scaleX(0.9086);transform-origin:0 0;">Add</div>
<div class="a" style="left:1188px;top:827px;width:138.3px;height:40px;border-radius:20px;background:#e0e0e0"></div>
<div id="t61" class="t" style="left:1203.80px;top:837.54px;font-size:18.5px;color:rgba(0,0,0,.87);font-weight:normal;transform:scaleX(0.9935);transform-origin:0 0;">onButtonText</div>
<svg class="i" style="left:1667.80px;top:834.70px;width:23.40px;height:23.40px;fill:#015785;" viewBox="0 0 24 24"><path d="M19 13h-6v6h-2v-6H5v-2h6V5h2v6h6v2z"/></svg>
<div id="t62" class="t" style="left:1697.00px;top:838.36px;font-size:18px;color:#015785;font-weight:bold;transform:scaleX(0.9086);transform-origin:0 0;">Add</div>
<svg class="i" style="left:1777.20px;top:834.70px;width:23.40px;height:23.40px;fill:#015785;" viewBox="0 0 24 24"><path d="M19 13h-6v6h-2v-6H5v-2h6V5h2v6h6v2z"/></svg>
<div id="t63" class="t" style="left:1806.70px;top:838.36px;font-size:18px;color:#015785;font-weight:bold;transform:scaleX(0.9086);transform-origin:0 0;">Add</div>
<div class="a" style="left:1188px;top:903px;width:177.9px;height:40px;border-radius:20px;background:#e0e0e0"></div>
<div id="t64" class="t" style="left:1203.80px;top:913.54px;font-size:18.5px;color:rgba(0,0,0,.87);font-weight:normal;transform:scaleX(0.9850);transform-origin:0 0;">rotationSpeedText</div>
<svg class="i" style="left:1667.80px;top:910.70px;width:23.40px;height:23.40px;fill:#015785;" viewBox="0 0 24 24"><path d="M19 13h-6v6h-2v-6H5v-2h6V5h2v6h6v2z"/></svg>
<div id="t65" class="t" style="left:1697.00px;top:914.36px;font-size:18px;color:#015785;font-weight:bold;transform:scaleX(0.9086);transform-origin:0 0;">Add</div>
<svg class="i" style="left:1777.20px;top:910.70px;width:23.40px;height:23.40px;fill:#015785;" viewBox="0 0 24 24"><path d="M19 13h-6v6h-2v-6H5v-2h6V5h2v6h6v2z"/></svg>
<div id="t66" class="t" style="left:1806.70px;top:914.36px;font-size:18px;color:#015785;font-weight:bold;transform:scaleX(0.9086);transform-origin:0 0;">Add</div>
<svg class="i" style="left:0;top:0;width:1920px;height:1080px" viewBox="0 0 1920 1080"><defs><filter id="glow" x="-30%" y="-30%" width="160%" height="160%"><feMorphology in="SourceAlpha" operator="dilate" radius="4.5" result="d"/><feGaussianBlur in="d" stdDeviation="2.8" result="b"/><feFlood flood-color="#adadad"/><feComposite in2="b" operator="in" result="g"/><feMorphology in="SourceAlpha" operator="dilate" radius="2.2" result="w0"/><feGaussianBlur in="w0" stdDeviation="0.8" result="w1"/><feFlood flood-color="#fff"/><feComposite in2="w1" operator="in" result="w"/><feMerge><feMergeNode in="g"/><feMergeNode in="w"/><feMergeNode in="SourceGraphic"/></feMerge></filter></defs><g transform="translate(717,450.5)" filter="url(#glow)" fill="#93001b"><path fill-rule="evenodd" d="M0 -36a36 36 0 1 0 0.01 0zM0 -27a27 27 0 1 1 -0.01 0z"/><path d="M -18 -24 C -30 -40, -40 -60, -37 -79 C -35 -90, -29 -97, -19 -100 C -6 -102, 8 -101, 13.5 -99.5 C 18 -98, 19.5 -95, 16.5 -91.5 C 4 -80, -4.5 -65, -7.5 -48 C -8.8 -40, -9.2 -35, -9.5 -28 Z" transform="rotate(0)"/><path d="M -18 -24 C -30 -40, -40 -60, -37 -79 C -35 -90, -29 -97, -19 -100 C -6 -102, 8 -101, 13.5 -99.5 C 18 -98, 19.5 -95, 16.5 -91.5 C 4 -80, -4.5 -65, -7.5 -48 C -8.8 -40, -9.2 -35, -9.5 -28 Z" transform="rotate(45)"/><path d="M -18 -24 C -30 -40, -40 -60, -37 -79 C -35 -90, -29 -97, -19 -100 C -6 -102, 8 -101, 13.5 -99.5 C 18 -98, 19.5 -95, 16.5 -91.5 C 4 -80, -4.5 -65, -7.5 -48 C -8.8 -40, -9.2 -35, -9.5 -28 Z" transform="rotate(90)"/><path d="M -18 -24 C -30 -40, -40 -60, -37 -79 C -35 -90, -29 -97, -19 -100 C -6 -102, 8 -101, 13.5 -99.5 C 18 -98, 19.5 -95, 16.5 -91.5 C 4 -80, -4.5 -65, -7.5 -48 C -8.8 -40, -9.2 -35, -9.5 -28 Z" transform="rotate(135)"/><path d="M -18 -24 C -30 -40, -40 -60, -37 -79 C -35 -90, -29 -97, -19 -100 C -6 -102, 8 -101, 13.5 -99.5 C 18 -98, 19.5 -95, 16.5 -91.5 C 4 -80, -4.5 -65, -7.5 -48 C -8.8 -40, -9.2 -35, -9.5 -28 Z" transform="rotate(180)"/><path d="M -18 -24 C -30 -40, -40 -60, -37 -79 C -35 -90, -29 -97, -19 -100 C -6 -102, 8 -101, 13.5 -99.5 C 18 -98, 19.5 -95, 16.5 -91.5 C 4 -80, -4.5 -65, -7.5 -48 C -8.8 -40, -9.2 -35, -9.5 -28 Z" transform="rotate(225)"/><path d="M -18 -24 C -30 -40, -40 -60, -37 -79 C -35 -90, -29 -97, -19 -100 C -6 -102, 8 -101, 13.5 -99.5 C 18 -98, 19.5 -95, 16.5 -91.5 C 4 -80, -4.5 -65, -7.5 -48 C -8.8 -40, -9.2 -35, -9.5 -28 Z" transform="rotate(270)"/><path d="M -18 -24 C -30 -40, -40 -60, -37 -79 C -35 -90, -29 -97, -19 -100 C -6 -102, 8 -101, 13.5 -99.5 C 18 -98, 19.5 -95, 16.5 -91.5 C 4 -80, -4.5 -65, -7.5 -48 C -8.8 -40, -9.2 -35, -9.5 -28 Z" transform="rotate(315)"/></g></svg>
<div id="t67" class="t" style="left:543.30px;top:581.49px;font-size:95.7px;color:#000;font-weight:normal;transform:scaleX(0.9721);transform-origin:0 0;">30 RPM</div>
<div class="a" style="left:503.75px;top:736.4px;width:147.5px;height:80.5px;border-radius:21px;background:#000"></div>
<div class="a" style="left:512.8px;top:745.3px;width:129.4px;height:62.4px;border-radius:11px;background:#00e800"></div>
<div class="a" style="left:778.9px;top:736.2px;width:148px;height:81px;border-radius:21px;background:#000"></div>
<div class="a" style="left:788.2px;top:745.3px;width:129.5px;height:62.7px;border-radius:11px;background:#ff0a1c"></div>
<div id="t68" class="t" style="left:551.40px;top:757.64px;font-size:40px;color:#000;font-weight:normal;transform:scaleX(0.9895);transform-origin:0 0;">On</div>
<div id="t69" class="t" style="left:822.00px;top:758.14px;font-size:40px;color:#000;font-weight:normal;transform:scaleX(1.1306);transform-origin:0 0;">Off</div>
<div class="a" style="left:564.7px;top:612.3px;width:290.6px;height:36.1px;border-radius:9px;background:rgba(0,0,0,.54)"></div><div id="t70" class="t" style="left:576.90px;top:622.25px;font-size:15px;color:#fff;font-weight:normal;transform:scaleX(0.9873);transform-origin:0 0;">text:</div><div id="t71" class="t" style="left:616.30px;top:622.25px;font-size:15px;color:#fff;font-weight:bold;transform:scaleX(0.9473);transform-origin:0 0;">rotationSpeedText</div><svg class="i" style="left:751.00px;top:618.05px;width:24.00px;height:24.00px;fill:#fff;" viewBox="0 0 24 24"><path d="M3 17.25V21h3.75L17.81 9.94l-3.75-3.75L3 17.25zM20.71 7.04c.39-.39.39-1.02 0-1.41l-2.34-2.34c-.39-.39-1.02-.39-1.41 0l-1.83 1.83 3.75 3.75 1.83-1.83z"/></svg><svg class="i" style="left:784.80px;top:617.15px;width:26.40px;height:26.40px;fill:#fff;" viewBox="0 0 24 24"><path d="M19.14 12.94c.04-.3.06-.61.06-.94 0-.32-.02-.64-.07-.94l2.03-1.58c.18-.14.23-.41.12-.61l-1.92-3.32c-.12-.22-.37-.29-.59-.22l-2.39.96c-.5-.38-1.03-.7-1.62-.94l-.36-2.54c-.04-.24-.24-.41-.48-.41h-3.84c-.24 0-.43.17-.47.41l-.36 2.540c-.59.24-1.13.57-1.62.94l-2.39-.96c-.22-.08-.47 0-.59.22L2.74 8.87c-.12.21-.08.47.12.61l2.03 1.58c-.05.3-.09.63-.09.94s.02.64.07.94l-2.03 1.58c-.18.14-.23.41-.12.61l1.92 3.32c.12.22.37.29.59.22l2.39-.96c.5.38 1.03.7 1.62.94l.36 2.54c.05.24.24.41.48.41h3.84c.24 0 .44-.17.47-.41l.36-2.54c.59-.24 1.13-.56 1.62-.94l2.39.96c.22.08.47 0 .59-.22l1.92-3.32c.12-.22.07-.47-.12-.61l-2.01-1.58zM12 15.6c-1.98 0-3.6-1.62-3.6-3.6s1.62-3.6 3.6-3.6 3.6 1.62 3.6 3.6-1.62 3.6-3.6 3.6z"/></svg><svg class="i" style="left:821.30px;top:617.85px;width:24.50px;height:24.50px;fill:#fff;" viewBox="0 0 24 24"><path d="M6 19c0 1.1.9 2 2 2h8c1.1 0 2-.9 2-2V7H6v12zM19 4h-3.5l-1-1h-5l-1 1H5v2h14V4z"/></svg>
<div class="a" style="left:470px;top:678px;width:210.6px;height:36.5px;border-radius:9px;background:rgba(0,0,0,.54)"></div><svg class="i" style="left:564.5px;top:714.5px;width:23px;height:11.8px" viewBox="0 0 23 11.8" preserveAspectRatio="none"><path d="M0 0H23L11.5 11.8Z" fill="rgba(0,0,0,.54)"/></svg><div id="t72" class="t" style="left:481.40px;top:688.15px;font-size:15px;color:#fff;font-weight:normal;transform:scaleX(1.0387);transform-origin:0 0;">g:</div><div id="t73" class="t" style="left:503.80px;top:688.15px;font-size:15px;color:#fff;font-weight:bold;transform:scaleX(0.9154);transform-origin:0 0;">onButton</div><svg class="i" style="left:575.30px;top:683.95px;width:24.00px;height:24.00px;fill:#fff;" viewBox="0 0 24 24"><path d="M3 17.25V21h3.75L17.81 9.94l-3.75-3.75L3 17.25zM20.71 7.04c.39-.39.39-1.02 0-1.41l-2.34-2.34c-.39-.39-1.02-.39-1.41 0l-1.83 1.83 3.75 3.75 1.83-1.83z"/></svg><svg class="i" style="left:609.40px;top:683.05px;width:26.40px;height:26.40px;fill:#fff;" viewBox="0 0 24 24"><path d="M19.14 12.94c.04-.3.06-.61.06-.94 0-.32-.02-.64-.07-.94l2.03-1.58c.18-.14.23-.41.12-.61l-1.92-3.32c-.12-.22-.37-.29-.59-.22l-2.39.96c-.5-.38-1.03-.7-1.62-.94l-.36-2.54c-.04-.24-.24-.41-.48-.41h-3.84c-.24 0-.43.17-.47.41l-.36 2.540c-.59.24-1.13.57-1.62.94l-2.39-.96c-.22-.08-.47 0-.59.22L2.74 8.87c-.12.21-.08.47.12.61l2.03 1.58c-.05.3-.09.63-.09.94s.02.64.07.94l-2.03 1.58c-.18.14-.23.41-.12.61l1.92 3.32c.12.22.37.29.59.22l2.39-.96c.5.38 1.03.7 1.62.94l.36 2.54c.05.24.24.41.48.41h3.84c.24 0 .44-.17.47-.41l.36-2.54c.59-.24 1.13-.56 1.62-.94l2.39.96c.22.08.47 0 .59-.22l1.92-3.32c.12-.22.07-.47-.12-.61l-2.01-1.58zM12 15.6c-1.98 0-3.6-1.62-3.6-3.6s1.62-3.6 3.6-3.6 3.6 1.62 3.6 3.6-1.62 3.6-3.6 3.6z"/></svg><svg class="i" style="left:645.60px;top:683.75px;width:24.50px;height:24.50px;fill:#fff;" viewBox="0 0 24 24"><path d="M6 19c0 1.1.9 2 2 2h8c1.1 0 2-.9 2-2V7H6v12zM19 4h-3.5l-1-1h-5l-1 1H5v2h14V4z"/></svg>
<div class="a" style="left:745px;top:678.1px;width:212.8px;height:36.2px;border-radius:9px;background:rgba(0,0,0,.54)"></div><svg class="i" style="left:840.1px;top:714.3px;width:23px;height:11.6px" viewBox="0 0 23 11.6" preserveAspectRatio="none"><path d="M0 0H23L11.5 11.6Z" fill="rgba(0,0,0,.54)"/></svg><div id="t74" class="t" style="left:756.00px;top:688.10px;font-size:15px;color:#fff;font-weight:normal;transform:scaleX(1.0387);transform-origin:0 0;">g:</div><div id="t75" class="t" style="left:778.90px;top:688.10px;font-size:15px;color:#fff;font-weight:bold;transform:scaleX(0.9352);transform-origin:0 0;">offButton</div><svg class="i" style="left:852.00px;top:683.90px;width:24.00px;height:24.00px;fill:#fff;" viewBox="0 0 24 24"><path d="M3 17.25V21h3.75L17.81 9.94l-3.75-3.75L3 17.25zM20.71 7.04c.39-.39.39-1.02 0-1.41l-2.34-2.34c-.39-.39-1.02-.39-1.41 0l-1.83 1.83 3.75 3.75 1.83-1.83z"/></svg><svg class="i" style="left:886.80px;top:683.00px;width:26.40px;height:26.40px;fill:#fff;" viewBox="0 0 24 24"><path d="M19.14 12.94c.04-.3.06-.61.06-.94 0-.32-.02-.64-.07-.94l2.03-1.58c.18-.14.23-.41.12-.61l-1.92-3.32c-.12-.22-.37-.29-.59-.22l-2.39.96c-.5-.38-1.03-.7-1.62-.94l-.36-2.54c-.04-.24-.24-.41-.48-.41h-3.84c-.24 0-.43.17-.47.41l-.36 2.540c-.59.24-1.13.57-1.62.94l-2.39-.96c-.22-.08-.47 0-.59.22L2.74 8.87c-.12.21-.08.47.12.61l2.03 1.58c-.05.3-.09.63-.09.94s.02.64.07.94l-2.03 1.58c-.18.14-.23.41-.12.61l1.92 3.32c.12.22.37.29.59.22l2.39-.96c.5.38 1.03.7 1.62.94l.36 2.54c.05.24.24.41.48.41h3.84c.24 0 .44-.17.47-.41l.36-2.54c.59-.24 1.13-.56 1.62-.94l2.39.96c.22.08.47 0 .59-.22l1.92-3.32c.12-.22.07-.47-.12-.61l-2.01-1.58zM12 15.6c-1.98 0-3.6-1.62-3.6-3.6s1.62-3.6 3.6-3.6 3.6 1.62 3.6 3.6-1.62 3.6-3.6 3.6z"/></svg><svg class="i" style="left:922.80px;top:683.70px;width:24.50px;height:24.50px;fill:#fff;" viewBox="0 0 24 24"><path d="M6 19c0 1.1.9 2 2 2h8c1.1 0 2-.9 2-2V7H6v12zM19 4h-3.5l-1-1h-5l-1 1H5v2h14V4z"/></svg>
<div class="a" style="left:423px;top:716.9px;width:309.0px;height:36.7px;border-radius:9px;background:rgba(0,0,0,.54)"></div><div id="t76" class="t" style="left:433.80px;top:727.15px;font-size:15px;color:#fff;font-weight:normal;transform:scaleX(1.0278);transform-origin:0 0;">rect:</div><div id="t77" class="t" style="left:474.00px;top:727.15px;font-size:15px;color:#fff;font-weight:bold;transform:scaleX(0.9198);transform-origin:0 0;">onButtonBackground</div><svg class="i" style="left:626.00px;top:722.95px;width:24.00px;height:24.00px;fill:#fff;" viewBox="0 0 24 24"><path d="M3 17.25V21h3.75L17.81 9.94l-3.75-3.75L3 17.25zM20.71 7.04c.39-.39.39-1.02 0-1.41l-2.34-2.34c-.39-.39-1.02-.39-1.41 0l-1.83 1.83 3.75 3.75 1.83-1.83z"/></svg><svg class="i" style="left:660.50px;top:722.05px;width:26.40px;height:26.40px;fill:#fff;" viewBox="0 0 24 24"><path d="M19.14 12.94c.04-.3.06-.61.06-.94 0-.32-.02-.64-.07-.94l2.03-1.58c.18-.14.23-.41.12-.61l-1.92-3.32c-.12-.22-.37-.29-.59-.22l-2.39.96c-.5-.38-1.03-.7-1.62-.94l-.36-2.54c-.04-.24-.24-.41-.48-.41h-3.84c-.24 0-.43.17-.47.41l-.36 2.540c-.59.24-1.13.57-1.62.94l-2.39-.96c-.22-.08-.47 0-.59.22L2.74 8.87c-.12.21-.08.47.12.61l2.03 1.58c-.05.3-.09.63-.09.94s.02.64.07.94l-2.03 1.58c-.18.14-.23.41-.12.61l1.92 3.32c.12.22.37.29.59.22l2.39-.96c.5.38 1.03.7 1.62.94l.36 2.54c.05.24.24.41.48.41h3.84c.24 0 .44-.17.47-.41l.36-2.54c.59-.24 1.13-.56 1.62-.94l2.39.96c.22.08.47 0 .59-.22l1.92-3.32c.12-.22.07-.47-.12-.61l-2.01-1.58zM12 15.6c-1.98 0-3.6-1.62-3.6-3.6s1.62-3.6 3.6-3.6 3.6 1.62 3.6 3.6-1.62 3.6-3.6 3.6z"/></svg><svg class="i" style="left:696.00px;top:722.75px;width:24.50px;height:24.50px;fill:#fff;" viewBox="0 0 24 24"><path d="M6 19c0 1.1.9 2 2 2h8c1.1 0 2-.9 2-2V7H6v12zM19 4h-3.5l-1-1h-5l-1 1H5v2h14V4z"/></svg>
<div class="a" style="left:697px;top:717.4px;width:312.0px;height:35.9px;border-radius:9px;background:rgba(0,0,0,.54)"></div><div id="t78" class="t" style="left:707.80px;top:727.25px;font-size:15px;color:#fff;font-weight:normal;transform:scaleX(1.0278);transform-origin:0 0;">rect:</div><div id="t79" class="t" style="left:748.40px;top:727.25px;font-size:15px;color:#fff;font-weight:bold;transform:scaleX(0.9285);transform-origin:0 0;">offButtonBackground</div><svg class="i" style="left:902.80px;top:723.05px;width:24.00px;height:24.00px;fill:#fff;" viewBox="0 0 24 24"><path d="M3 17.25V21h3.75L17.81 9.94l-3.75-3.75L3 17.25zM20.71 7.04c.39-.39.39-1.02 0-1.41l-2.34-2.34c-.39-.39-1.02-.39-1.41 0l-1.83 1.83 3.75 3.75 1.83-1.83z"/></svg><svg class="i" style="left:937.10px;top:722.15px;width:26.40px;height:26.40px;fill:#fff;" viewBox="0 0 24 24"><path d="M19.14 12.94c.04-.3.06-.61.06-.94 0-.32-.02-.64-.07-.94l2.03-1.58c.18-.14.23-.41.12-.61l-1.92-3.32c-.12-.22-.37-.29-.59-.22l-2.39.96c-.5-.38-1.03-.7-1.62-.94l-.36-2.54c-.04-.24-.24-.41-.48-.41h-3.84c-.24 0-.43.17-.47.41l-.36 2.540c-.59.24-1.13.57-1.62.94l-2.39-.96c-.22-.08-.47 0-.59.22L2.74 8.87c-.12.21-.08.47.12.61l2.03 1.58c-.05.3-.09.63-.09.94s.02.64.07.94l-2.03 1.58c-.18.14-.23.41-.12.61l1.92 3.32c.12.22.37.29.59.22l2.39-.96c.5.38 1.03.7 1.62.94l.36 2.54c.05.24.24.41.48.41h3.84c.24 0 .44-.17.47-.41l.36-2.54c.59-.24 1.13-.56 1.62-.94l2.39.96c.22.08.47 0 .59-.22l1.92-3.32c.12-.22.07-.47-.12-.61l-2.01-1.58zM12 15.6c-1.98 0-3.6-1.62-3.6-3.6s1.62-3.6 3.6-3.6 3.6 1.62 3.6 3.6-1.62 3.6-3.6 3.6z"/></svg><svg class="i" style="left:972.70px;top:722.85px;width:24.50px;height:24.50px;fill:#fff;" viewBox="0 0 24 24"><path d="M6 19c0 1.1.9 2 2 2h8c1.1 0 2-.9 2-2V7H6v12zM19 4h-3.5l-1-1h-5l-1 1H5v2h14V4z"/></svg>
<div class="a" style="left:449px;top:758.3px;width:257.0px;height:36.7px;border-radius:9px;background:rgba(0,0,0,.54)"></div><div id="t80" class="t" style="left:460.00px;top:768.55px;font-size:15px;color:#fff;font-weight:normal;transform:scaleX(0.9873);transform-origin:0 0;">text:</div><div id="t81" class="t" style="left:499.40px;top:768.55px;font-size:15px;color:#fff;font-weight:bold;transform:scaleX(0.9401);transform-origin:0 0;">onButtonText</div><svg class="i" style="left:600.30px;top:764.35px;width:24.00px;height:24.00px;fill:#fff;" viewBox="0 0 24 24"><path d="M3 17.25V21h3.75L17.81 9.94l-3.75-3.75L3 17.25zM20.71 7.04c.39-.39.39-1.02 0-1.41l-2.34-2.34c-.39-.39-1.02-.39-1.41 0l-1.83 1.83 3.75 3.75 1.83-1.83z"/></svg><svg class="i" style="left:634.60px;top:763.45px;width:26.40px;height:26.40px;fill:#fff;" viewBox="0 0 24 24"><path d="M19.14 12.94c.04-.3.06-.61.06-.94 0-.32-.02-.64-.07-.94l2.03-1.58c.18-.14.23-.41.12-.61l-1.92-3.32c-.12-.22-.37-.29-.59-.22l-2.39.96c-.5-.38-1.03-.7-1.62-.94l-.36-2.54c-.04-.24-.24-.41-.48-.41h-3.84c-.24 0-.43.17-.47.41l-.36 2.540c-.59.24-1.13.57-1.62.94l-2.39-.96c-.22-.08-.47 0-.59.22L2.74 8.87c-.12.21-.08.47.12.61l2.03 1.58c-.05.3-.09.63-.09.94s.02.64.07.94l-2.03 1.58c-.18.14-.23.41-.12.61l1.92 3.32c.12.22.37.29.59.22l2.39-.96c.5.38 1.03.7 1.62.94l.36 2.54c.05.24.24.41.48.41h3.84c.24 0 .44-.17.47-.41l.36-2.54c.59-.24 1.13-.56 1.62-.94l2.39.96c.22.08.47 0 .59-.22l1.92-3.32c.12-.22.07-.47-.12-.61l-2.01-1.58zM12 15.6c-1.98 0-3.6-1.62-3.6-3.6s1.62-3.6 3.6-3.6 3.6 1.62 3.6 3.6-1.62 3.6-3.6 3.6z"/></svg><svg class="i" style="left:670.60px;top:764.15px;width:24.50px;height:24.50px;fill:#fff;" viewBox="0 0 24 24"><path d="M6 19c0 1.1.9 2 2 2h8c1.1 0 2-.9 2-2V7H6v12zM19 4h-3.5l-1-1h-5l-1 1H5v2h14V4z"/></svg>
<div class="a" style="left:722.2px;top:758.4px;width:259.8px;height:36.5px;border-radius:9px;background:rgba(0,0,0,.54)"></div><div id="t82" class="t" style="left:733.20px;top:768.55px;font-size:15px;color:#fff;font-weight:normal;transform:scaleX(0.9873);transform-origin:0 0;">text:</div><div id="t83" class="t" style="left:773.00px;top:768.55px;font-size:15px;color:#fff;font-weight:bold;transform:scaleX(0.9568);transform-origin:0 0;">offButtonText</div><svg class="i" style="left:875.70px;top:764.35px;width:24.00px;height:24.00px;fill:#fff;" viewBox="0 0 24 24"><path d="M3 17.25V21h3.75L17.81 9.94l-3.75-3.75L3 17.25zM20.71 7.04c.39-.39.39-1.02 0-1.41l-2.34-2.34c-.39-.39-1.02-.39-1.41 0l-1.83 1.83 3.75 3.75 1.83-1.83z"/></svg><svg class="i" style="left:910.10px;top:763.45px;width:26.40px;height:26.40px;fill:#fff;" viewBox="0 0 24 24"><path d="M19.14 12.94c.04-.3.06-.61.06-.94 0-.32-.02-.64-.07-.94l2.03-1.58c.18-.14.23-.41.12-.61l-1.92-3.32c-.12-.22-.37-.29-.59-.22l-2.39.96c-.5-.38-1.03-.7-1.62-.94l-.36-2.54c-.04-.24-.24-.41-.48-.41h-3.84c-.24 0-.43.17-.47.41l-.36 2.540c-.59.24-1.13.57-1.62.94l-2.39-.96c-.22-.08-.47 0-.59.22L2.74 8.87c-.12.21-.08.47.12.61l2.03 1.58c-.05.3-.09.63-.09.94s.02.64.07.94l-2.03 1.58c-.18.14-.23.41-.12.61l1.92 3.32c.12.22.37.29.59.22l2.39-.96c.5.38 1.03.7 1.62.94l.36 2.54c.05.24.24.41.48.41h3.84c.24 0 .44-.17.47-.41l.36-2.54c.59-.24 1.13-.56 1.62-.94l2.39.96c.22.08.47 0 .59-.22l1.92-3.32c.12-.22.07-.47-.12-.61l-2.01-1.58zM12 15.6c-1.98 0-3.6-1.62-3.6-3.6s1.62-3.6 3.6-3.6 3.6 1.62 3.6 3.6-1.62 3.6-3.6 3.6z"/></svg><svg class="i" style="left:946.50px;top:764.15px;width:24.50px;height:24.50px;fill:#fff;" viewBox="0 0 24 24"><path d="M6 19c0 1.1.9 2 2 2h8c1.1 0 2-.9 2-2V7H6v12zM19 4h-3.5l-1-1h-5l-1 1H5v2h14V4z"/></svg>
<div class="a" style="left:514.4px;top:427.8px;width:404.3px;height:44.1px;border:3.5px solid #fbc12e;border-radius:11px;box-shadow:0 2px 8px rgba(90,60,20,.32)"></div>
<div class="a" style="left:517.9px;top:431.3px;width:397.3px;height:37.1px;border:1px solid #8a8a8a;border-radius:8px;background:#fff;box-shadow:inset 0 0 5px 1px #fdebd3"></div>
<div id="t84" class="t" style="left:528.60px;top:442.10px;font-size:15px;color:#3a3a3a;font-weight:bold;transform:scaleX(0.9152);transform-origin:0 0;">Update tag:</div>
<div class="a" style="left:615.4px;top:437.5px;width:218.8px;height:24.5px;border:2px solid #015785;border-radius:5px;background:#fff"></div>
<div id="t85" class="t" style="left:630.80px;top:441.96px;font-size:16px;color:#333;font-weight:normal;transform:scaleX(0.9438);transform-origin:0 0;">fan</div>
<div class="a" style="left:652.8px;top:441px;width:1.2px;height:18px;background:#222"></div>
<svg class="i" style="left:0;top:0;width:1px;height:1px" viewBox="0 0 1 1"><path d="M622.7 457.6 Q 636 455.6 652 456.6 Q 668 457.6 680.6 459" fill="none" stroke="#fbc12e" stroke-width="1.6" stroke-linecap="round"/></svg>
<div class="a" style="left:840.3px;top:433.6px;width:35px;height:34.1px;border:3px solid #fbc12e;border-radius:50%;background:#ececec"></div>
<svg class="i" style="left:845.80px;top:438.80px;width:24.00px;height:24.00px;fill:#3a3a3a;" viewBox="0 0 24 24"><path d="M9 16.17L4.83 12l-1.42 1.41L9 19 21 7l-1.41-1.41z"/></svg>
<svg class="i" style="left:880.20px;top:439.00px;width:24.00px;height:24.00px;fill:#3a3a3a;" viewBox="0 0 24 24"><path d="M19 6.41L17.59 5 12 10.59 6.41 5 5 6.41 10.59 12 5 17.59 6.41 19 12 13.41 17.59 19 19 17.59 13.41 12z"/></svg>
<svg class="i" style="left:840px;top:455px;width:40px;height:40px" viewBox="840 455 40 40"><path d="M853.1 472.6V461.8Q853.1 460.2 855 460.2Q856.9 460.2 856.9 461.8V465.4H858.9L859.4 465.9L861.9 466.1L863.7 467.2L865.6 469.2V475.4L864.4 476.6L863.7 479.2V481H854.4V479.4L853.3 477.6L851.9 475L850 472.2L849.3 470.6L849.6 469.4H851.9L853.1 470.8Z" fill="#fff" stroke="#000" stroke-width="1.35" stroke-linejoin="round"/><path d="M856.6 465.6V469.8M859.5 466.2V469.6M862.4 467.2V470.6" stroke="#000" stroke-width="1.2" fill="none"/><rect x="854.4" y="481" width="9.3" height="5.6" fill="#fbc12e" stroke="#000" stroke-width="1.35"/><rect x="860.1" y="483.1" width="1.8" height="1.8" fill="#000"/></svg>
<div class="a" style="left:828px;top:398px;width:59.8px;height:29.6px;border-radius:5px;background:#616161"></div>
<div id="t86" class="t" style="left:838.60px;top:405.30px;font-size:15px;color:#fff;font-weight:normal;transform:scaleX(1.0231);transform-origin:0 0;">Apply</div>
<svg class="i" style="left:0;top:0;width:1px;height:1px" viewBox="0 0 1 1"><circle cx="917.4" cy="452.5" r="5" fill="#fbc12e"/><path d="M921 452.5H972" stroke="#fbc12e" stroke-width="3" stroke-dasharray="9 5.5"/></svg>
<div class="a" style="left:970px;top:434.4px;width:499.8px;height:41px;border:3px solid #fbc12e;border-radius:9px;background:#fdf0e2;box-shadow:0 0 6px rgba(251,193,46,.45)"></div>
<div id="t87" class="t" style="left:978.00px;top:442.14px;font-size:27px;color:#000;font-weight:normal;transform:scaleX(1.0355);transform-origin:0 0;">Change the tag name and click &quot;Apply&quot;</div>
<div class="a" style="left:993.6px;top:402.6px;width:28.6px;height:34.4px;border:3px solid #fbc12e;border-radius:9px;background:#fff;box-shadow:0 0 6px rgba(251,193,46,.45)"></div>
<div id="t88" class="t" style="left:1000.50px;top:407.14px;font-size:27px;color:#000;font-weight:normal;">2</div>
</body></html>
